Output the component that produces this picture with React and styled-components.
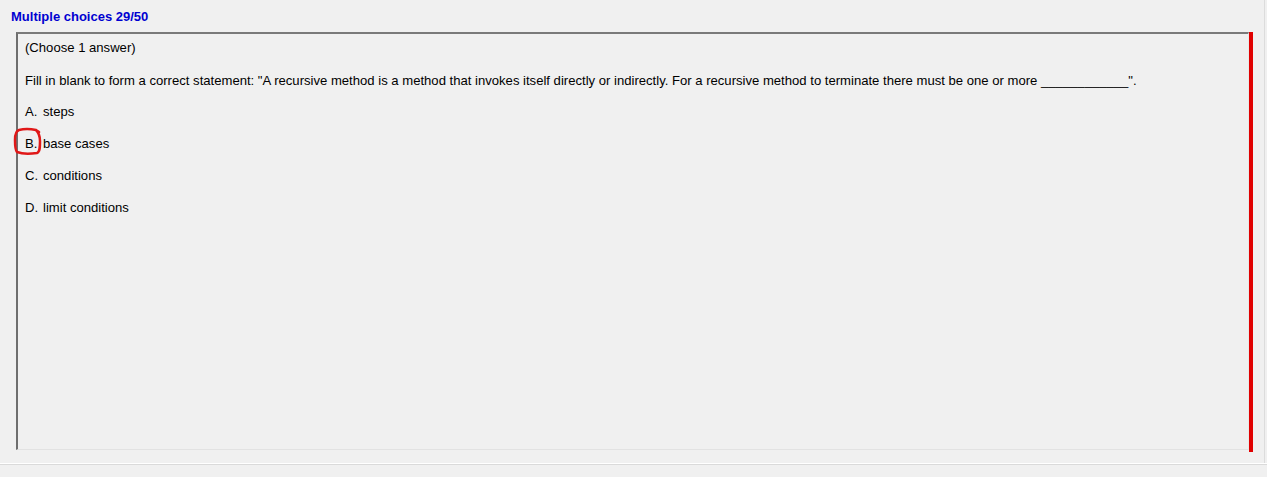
import React from 'react';
import styled, { createGlobalStyle } from 'styled-components';

const GlobalStyle = createGlobalStyle`
  html, body {
    margin: 0;
    padding: 0;
    background: #f0f0f0;
  }
  body {
    font-family: "Liberation Sans", Arial, sans-serif;
  }
`;

const Window = styled.div`
  width: 1267px;
  height: 477px;
  background: #f0f0f0;
  display: flex;
  flex-direction: column;
  overflow: hidden;
`;

const Body = styled.div`
  flex: 1;
  display: flex;
  border-right: 1px solid #dcdcdc;
  margin-right: 2px;
  padding-right: 11px;
`;

const Content = styled.div`
  flex: 1;
  display: flex;
  flex-direction: column;
`;

const Title = styled.div`
  color: #0000d0;
  font-weight: bold;
  font-size: 13px;
  line-height: 16px;
  padding: 9px 0 0 11px;
  height: 23px;
`;

const PanelRow = styled.div`
  display: flex;
  margin-left: 16px;
  height: 420px;
`;

const Panel = styled.div`
  flex: 1;
  position: relative;
  border-top: 2px solid #7a7a7a;
  border-left: 2px solid #6e6e6e;
  border-bottom: 1px solid #e2e2e2;
  border-right: 1px solid #e8e8e8;
  padding: 6px 0 0 7px;
  font-size: 13.1px;
  color: #000;
  box-sizing: border-box;
  height: 418px;
`;

const MarkBar = styled.div`
  width: 4px;
  background: #e00000;
  align-self: stretch;
`;

const Line = styled.div`
  line-height: 15px;
  white-space: nowrap;
  margin-bottom: ${(p) => p.$gap}px;
`;

const Option = styled.div`
  display: flex;
  line-height: 15px;
  margin-bottom: 17px;
`;

const Letter = styled.span`
  width: 18px;
`;

const Circle = styled.svg`
  position: absolute;
  left: -6px;
  top: 93px;
  pointer-events: none;
`;

const Footer = styled.div`
  height: 13px;
  border-top: 1px solid #ffffff;
  box-shadow: inset 0 1px 0 #dadada;
  background: #f0f0f0;
`;

const options = [
  ['A.', 'steps'],
  ['B.', 'base cases'],
  ['C.', 'conditions'],
  ['D.', 'limit conditions'],
];

export default function App() {
  return (
    <Window>
      <GlobalStyle />
      <Body>
        <Content>
          <Title>Multiple choices 29/50</Title>
          <PanelRow>
            <Panel>
              <Line $gap={18}>(Choose 1 answer)</Line>
              <Line $gap={16}>
                Fill in blank to form a correct statement: "A recursive method is a method that invokes itself directly or indirectly. For a recursive method to terminate there must be one or more ____________".
              </Line>
              {options.map(([l, t]) => (
                <Option key={l}>
                  <Letter>{l}</Letter>
                  <span>{t}</span>
                </Option>
              ))}
              <Circle width="34" height="32" viewBox="0 0 34 32">
                <path
                  d="M24 3 C19 2 11 2 7 3 C4 4 3 7 3 13 C3 19 3 23 5 25 C10 27 18 27 25 26 C28 25 28 20 28 14 C28 9 27 6 24 3 L27 5"
                  fill="none"
                  stroke="#e01818"
                  strokeWidth="2.5"
                  strokeLinecap="round"
                  strokeLinejoin="round"
                />
              </Circle>
            </Panel>
            <MarkBar />
          </PanelRow>
        </Content>
      </Body>
      <Footer />
    </Window>
  );
}
